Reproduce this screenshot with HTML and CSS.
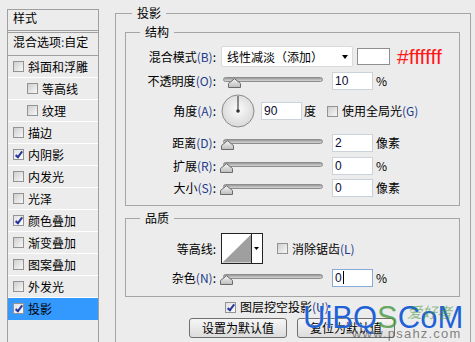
FILE: index.html
```html
<!DOCTYPE html>
<html lang="zh-CN">
<head>
  <meta charset="UTF-8">
  <title>图层样式 - 投影</title>
  <link rel="stylesheet" href="styles.css">
</head>
<body>

  <div class="dialog">

    <!-- 左侧样式列表 -->
    <aside class="styles-panel">
      <div class="panel-title">样式</div>
      <div class="panel-blend">混合选项<span class="key">:</span>自定</div>
      <ul class="fx-list">
        <li class="fx"><span class="cb"></span>斜面和浮雕</li>
        <li class="fx sub"><span class="cb"></span>等高线</li>
        <li class="fx sub"><span class="cb"></span>纹理</li>
        <li class="fx"><span class="cb"></span>描边</li>
        <li class="fx"><span class="cb on"></span>内阴影</li>
        <li class="fx"><span class="cb"></span>内发光</li>
        <li class="fx"><span class="cb"></span>光泽</li>
        <li class="fx"><span class="cb on"></span>颜色叠加</li>
        <li class="fx"><span class="cb"></span>渐变叠加</li>
        <li class="fx"><span class="cb"></span>图案叠加</li>
        <li class="fx"><span class="cb"></span>外发光</li>
        <li class="fx active"><span class="cb on"></span>投影</li>
      </ul>
    </aside>

    <!-- 右侧：投影设置 -->
    <main class="settings">
      <fieldset class="group outer">
        <legend>投影</legend>

        <fieldset class="group inner structure">
          <legend>结构</legend>
          <div class="rows">
            <div class="row row-blend">
              <span class="lbl">混合模式<span class="key">(B)</span>:</span>
              <div class="select">
                <span>线性减淡（添加）</span>
                <span class="arrow"></span>
              </div>
              <span class="swatch"></span>
              <span class="hex">#ffffff</span>
            </div>
            <div class="row row-opacity">
              <span class="lbl">不透明度<span class="key">(O)</span>:</span>
              <div class="slider">
                <div class="track"></div>
                <svg class="thumb" style="left: 5px" width="13" height="10" viewBox="0 0 13 10"><use href="#thumb"/></svg>
              </div>
              <span class="num">10</span>
              <span class="unit">%</span>
            </div>
            <div class="row row-angle">
              <span class="lbl">角度<span class="key">(A)</span>:</span>
              <svg class="dial" width="34" height="34" viewBox="0 0 34 34">
                <defs>
                  <radialGradient id="dialFill" cx="50%" cy="45%" r="55%">
                    <stop offset="0" stop-color="#fbfbfb"/>
                    <stop offset="1" stop-color="#d9d9d9"/>
                  </radialGradient>
                </defs>
                <circle cx="17" cy="17" r="16" fill="url(#dialFill)" stroke="#8a8a8a"/>
                <line x1="17" y1="17" x2="17" y2="2" stroke="#555" stroke-width="1.3"/>
                <circle cx="17" cy="17" r="1.8" fill="#333"/>
              </svg>
              <span class="num">90</span>
              <span class="unit">度</span>
              <span class="cb global"></span>
              <span class="cb-text">使用全局光<span class="key">(G)</span></span>
            </div>
            <div class="row row-distance">
              <span class="lbl">距离<span class="key">(D)</span>:</span>
              <div class="slider">
                <div class="track"></div>
                <svg class="thumb" style="left: -2px" width="13" height="10" viewBox="0 0 13 10"><use href="#thumb"/></svg>
              </div>
              <span class="num">2</span>
              <span class="unit">像素</span>
            </div>
            <div class="row row-spread">
              <span class="lbl">扩展<span class="key">(R)</span>:</span>
              <div class="slider">
                <div class="track"></div>
                <svg class="thumb" style="left: -3px" width="13" height="10" viewBox="0 0 13 10"><use href="#thumb"/></svg>
              </div>
              <span class="num">0</span>
              <span class="unit">%</span>
            </div>
            <div class="row row-size">
              <span class="lbl">大小<span class="key">(S)</span>:</span>
              <div class="slider">
                <div class="track"></div>
                <svg class="thumb" style="left: -3px" width="13" height="10" viewBox="0 0 13 10"><use href="#thumb"/></svg>
              </div>
              <span class="num">0</span>
              <span class="unit">像素</span>
            </div>
          </div>
        </fieldset>

        <fieldset class="group inner quality">
          <legend>品质</legend>
          <div class="rows">
            <div class="row row-contour">
              <span class="lbl">等高线:</span>
              <svg class="contour" width="42" height="31" viewBox="0 0 42 31">
                <rect x="0.5" y="0.5" width="41" height="30" fill="#fff" stroke="#222"/>
                <polygon points="1.5,29.5 30,1.5 30,29.5" fill="#9f9f9f"/>
                <line x1="30.5" y1="0.5" x2="30.5" y2="30.5" stroke="#222"/>
                <polygon points="33,14 38,14 35.5,17" fill="#000"/>
              </svg>
              <span class="cb aa"></span>
              <span class="cb-text">消除锯齿<span class="key">(L)</span></span>
            </div>
            <div class="row row-noise">
              <span class="lbl">杂色<span class="key">(N)</span>:</span>
              <div class="slider">
                <div class="track"></div>
                <svg class="thumb" style="left: -3px" width="13" height="10" viewBox="0 0 13 10"><use href="#thumb"/></svg>
              </div>
              <span class="num focus">0<span class="caret"></span></span>
              <span class="unit">%</span>
            </div>
          </div>
        </fieldset>

        <div class="knockout">
          <span class="cb on"></span>
          <span>图层挖空投影<span class="key">(U)</span></span>
        </div>

        <div class="buttons">
          <button type="button">设置为默认值</button>
          <button type="button">复位为默认值</button>
        </div>
      </fieldset>
    </main>
  </div>

  <!-- 水印 -->
  <div class="watermark">
    <span class="wm-blue">UiBQ</span><span class="wm-green">S</span><span class="wm-blue">CoM</span>
    <span class="wm-cn">爱好者</span>
    <span class="wm-url">www.psahz.com</span>
  </div>

  <!-- 滑块图形 -->
  <svg width="0" height="0" class="defs">
    <defs>
      <linearGradient id="thumbFill" x1="0" y1="0" x2="0" y2="1">
        <stop offset="0" stop-color="#f6f6f6"/>
        <stop offset="1" stop-color="#bcbcbc"/>
      </linearGradient>
      <symbol id="thumb" viewBox="0 0 13 10">
        <path d="M0.5 9.5 V5.5 L6.5 0.7 L12.5 5.5 V9.5 Z" fill="url(#thumbFill)" stroke="#6b6b6b"/>
      </symbol>
    </defs>
  </svg>

</body>
</html>
```

FILE: styles.css
```css
body {
  margin: 0;
  width: 475px;
  height: 342px;
  overflow: hidden;
  position: relative;
  background: #ececec;
  color: #000;
  font: 12px/16px "Noto Sans CJK SC", "Liberation Sans", sans-serif;
}

.dialog {
  display: flex;
  align-items: flex-start;
}

.key {
  color: #1d3a8a;
}

/* 左侧列表 */
.styles-panel {
  margin: 9px 0 0 7px;
  width: 90px;
  height: 332px;
  border: 1px solid #a0a0a0;
  border-bottom: none;
  background: #ececec;
}

.panel-title {
  height: 20px;
  padding-left: 5px;
  border-bottom: 3px double #a0a0a0;
}

.panel-blend {
  height: 22px;
  line-height: 18px;
  padding-left: 5px;
  border-bottom: 1px solid #a0a0a0;
}

.fx-list {
  list-style: none;
  margin: 0;
  padding: 0;
}

.fx {
  display: flex;
  align-items: center;
  gap: 4px;
  height: 21px;
  padding-left: 5px;
  border-bottom: 1px solid #fff;
}

.fx.sub {
  padding-left: 19px;
}

.fx.active {
  background: #3399ff;
  border-bottom-color: #3399ff;
}

/* 复选框 */
.cb {
  position: relative;
  flex: none;
  width: 11px;
  height: 11px;
  box-sizing: border-box;
  border: 1px solid #939393;
  background: linear-gradient(135deg, #cfcfcf, #f7f7f7);
}

.cb.on {
  background: linear-gradient(135deg, #e2e2e2, #fbfbfb);
}

.cb.on::after {
  content: "";
  position: absolute;
  left: 3px;
  top: 0;
  width: 2px;
  height: 6px;
  border: solid #26379b;
  border-width: 0 2px 2px 0;
  transform: rotate(38deg);
}

/* 右侧设置 */
.settings {
  margin: 5px 0 0 16px;
  width: 356px;
}

.group {
  margin: 0;
  padding: 0;
  min-width: 0;
  border: 1px solid #a5a5a5;
}

.group > legend {
  padding: 0 5px;
  line-height: 16px;
}

.outer {
  box-sizing: border-box;
  height: 337px;
  border-bottom: none;
}

.outer > legend {
  margin-left: 16px;
}

.inner {
  margin: 3px 10px 0 9px;
}

.inner > legend {
  margin-left: 14px;
}

.rows {
  display: flex;
  flex-direction: column;
}

.structure .rows {
  gap: 2px;
  padding: 6px 0;
}

.quality {
  margin-top: 4px;
}

.quality .rows {
  gap: 2px;
  padding: 7px 0;
}

.row {
  display: flex;
  align-items: center;
}

.row-blend { height: 21px; }
.row-opacity { height: 23px; }
.row-angle { height: 34px; }
.row-distance { height: 25px; }
.row-spread { height: 17px; }
.row-size { height: 23px; }
.row-contour { height: 31px; }
.row-noise { height: 23px; }

.lbl {
  flex: none;
  width: 90px;
  margin-right: 5px;
  text-align: right;
}

.select {
  display: flex;
  align-items: center;
  justify-content: space-between;
  width: 132px;
  height: 21px;
  box-sizing: border-box;
  padding: 0 4px 0 5px;
  background: #fff;
  border: 1px solid #dadada;
  border-radius: 2px;
}

.arrow {
  width: 0;
  height: 0;
  border-left: 3.5px solid transparent;
  border-right: 3.5px solid transparent;
  border-top: 4px solid #000;
}

.swatch {
  width: 33px;
  height: 17px;
  box-sizing: border-box;
  margin-left: 4px;
  background: #fff;
  border: 1px solid #8e8e8e;
}

.hex {
  margin-left: 7px;
  color: #ff1818;
  font: 21px/21px "Liberation Sans", sans-serif;
}

.slider {
  position: relative;
  flex: none;
  width: 100px;
  height: 14px;
  margin-left: 2px;
}

.track {
  height: 5px;
  margin-top: 3px;
  box-sizing: border-box;
  border: 1px solid #8c8c8c;
  border-radius: 3px;
  background: linear-gradient(#9a9a9a, #d6d6d6);
}

.thumb {
  position: absolute;
  top: 4px;
}

.num {
  flex: none;
  width: 41px;
  height: 18px;
  box-sizing: border-box;
  margin-left: 9px;
  padding-left: 2px;
  background: #fff;
  border: 1px solid #cbd2da;
  font: 12px/16px "Liberation Sans", sans-serif;
  color: #0a0a30;
}

.num.focus {
  border-color: #86a9d6;
}

.caret {
  display: inline-block;
  width: 1px;
  height: 13px;
  margin-left: 1px;
  vertical-align: -2px;
  background: #000;
}

.unit {
  margin-left: 3px;
}

.dial {
  flex: none;
}

.row-angle .num {
  margin-left: 6px;
}

.row-angle .unit {
  margin-left: 2px;
}

.cb.global {
  margin-left: 11px;
}

.cb-text {
  margin-left: 4px;
}

.contour {
  flex: none;
}

.cb.aa {
  margin-left: 14px;
}

.knockout {
  display: flex;
  align-items: center;
  gap: 4px;
  height: 14px;
  margin: 3px 0 0 109px;
}

.buttons {
  display: flex;
  gap: 10px;
  margin: 4px 0 0 73px;
}

.buttons button {
  width: 98px;
  height: 20px;
  padding: 0;
  border: 1px solid #707070;
  border-radius: 3px;
  background: linear-gradient(#f6f6f6, #dcdcdc);
  font: 12px/16px "Noto Sans CJK SC", sans-serif;
  color: #000;
}

/* 水印 */
.watermark {
  position: absolute;
  left: 303px;
  top: 301px;
  width: 170px;
  height: 40px;
  white-space: nowrap;
  font: 31px/34px "Liberation Sans", sans-serif;
}

.wm-blue {
  color: #1f62d6;
  text-shadow: 0 0 1px #fff;
}

.wm-green {
  color: rgba(70, 150, 60, 0.8);
}

.wm-cn {
  position: absolute;
  left: 104px;
  top: 2px;
  font: italic 15px/18px "Noto Sans CJK SC", sans-serif;
  color: rgba(60, 140, 50, 0.55);
}

.wm-url {
  position: absolute;
  left: 49px;
  top: 26px;
  font: 13px/13px "Liberation Sans", sans-serif;
  letter-spacing: 1.2px;
  color: rgba(90, 90, 90, 0.75);
}

.defs {
  position: absolute;
}
```
